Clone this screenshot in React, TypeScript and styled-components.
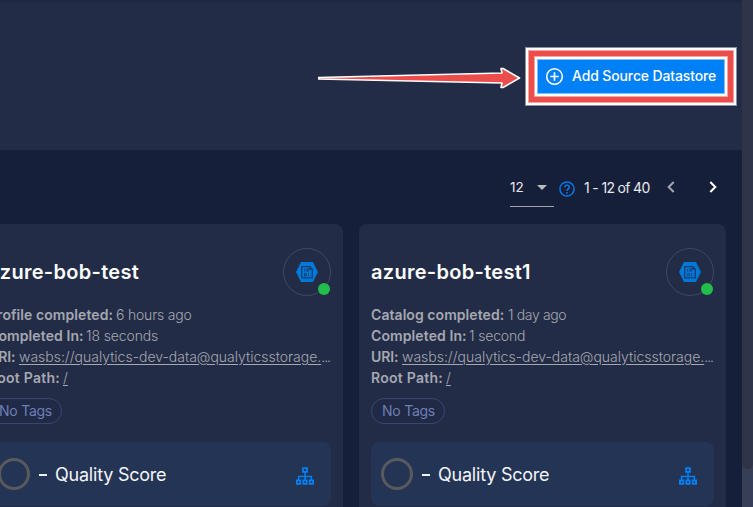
import React from "react";
import styled, { createGlobalStyle } from "styled-components";

const Global = createGlobalStyle`
  * { box-sizing: border-box; }
  body { margin: 0; overflow: hidden; background: #161f39; font-family: Inter, "Noto Sans", sans-serif; }
`;
const Page = styled.div`display: flex; width: 753px; height: 507px; overflow: hidden;`;
const Main = styled.main`width: 742px; height: 507px; overflow: hidden; background: #161f39;`;
const Track = styled.div`width: 11px; background: #373f56;`;
const Thumb = styled.div`height: 469px; background: #2f3449; border-radius: 0 0 5px 5px;`;
const Header = styled.header`
  height: 150px; padding: 47px 5px 0 318px; display: flex; align-items: flex-start;
  background: linear-gradient(#1d2640, #232c46 4px);
`;
const ArrowSvg = styled.svg`display: block; width: 203px; height: 24px; margin: 19px 4px 0 0; flex: none;`;
const Frame = styled.div`
  width: 212px; height: 59px; padding: 12px; flex: none; background: #0080f6;
  box-shadow: inset 0 0 0 1px #8990a0, inset 0 0 0 3px #fff, inset 0 0 0 4px #f4a5a4,
    inset 0 0 0 9px #ec4d4b, inset 0 0 0 10px #f4a5a4, inset 0 0 0 12px #fff, inset 0 0 0 13px #7fbffa;
`;
const AddButton = styled.button`
  display: flex; align-items: center; width: 188px; height: 35px; padding: 0 0 1px 8px; border: 0;
  background: transparent; color: #fff; font: 450 14px/20px Inter, sans-serif; letter-spacing: -0.13px; white-space: nowrap;
  svg { margin-right: 8px; flex: none; }
`;
const Toolbar = styled.div`
  height: 74px; padding: 18px 0 0 510px; display: flex; align-items: flex-start; color: #e8e9ed;
  font-size: 14px; line-height: 20px; white-space: nowrap;
`;
const PageSize = styled.div`
  display: flex; justify-content: space-between; width: 44px; height: 39px; padding: 9px 7px 0 0;
  border-bottom: 1px solid #a2a5b0; font-size: 13.5px;
  svg { margin-top: 8px; }
`;
const Help = styled.svg`display: block; margin: 13px 9px 0 5px; flex: none;`;
const Range = styled.span`width: 83px; padding-top: 10px; letter-spacing: -0.7px; word-spacing: 0.1px;`;
const Chevron = styled.svg`
  display: block; width: 8px; height: 12px; margin-top: 13px; flex: none;
  & + & { margin-left: 34px; }
`;
const Cards = styled.section`
  display: grid; grid-template-columns: 367px 367px; column-gap: 16px; margin-left: -24px;
`;
const Card = styled.article`
  height: 310px; padding: 24px 12px; border-radius: 8px; background: #232c46; color: #a5a8b1;
`;
const CardHead = styled.div`display: flex; justify-content: space-between; height: 48px; margin-bottom: 8px;`;
const Title = styled.h2<{ $track: number }>`
  margin: 0; color: #fff; font-size: 20px; line-height: 48px; font-weight: 600;
  letter-spacing: ${p => p.$track}px; white-space: nowrap;
`;
const Avatar = styled.div`
  position: relative; width: 48px; height: 48px; border: 1px solid #414961; border-radius: 50%;
  display: grid; place-items: center;
`;
const Status = styled.i`
  position: absolute; right: 0; bottom: 0; width: 12px; height: 12px; border-radius: 50%; background: #22bd4b;
`;
const Line = styled.div`display: flex; height: 21px; font-size: 14px; line-height: 21px; white-space: nowrap;`;
const Label = styled.b<{ $w: number; $track: number }>`
  flex: 0 0 ${p => p.$w}px; font-weight: 600; letter-spacing: ${p => p.$track}px;
`;
const Value = styled.span<{ $track: number }>`font-weight: 300; letter-spacing: ${p => p.$track}px;`;
const Link = styled(Value)`text-decoration: underline; text-underline-offset: 2px; text-decoration-skip-ink: auto;`;
const Tag = styled.div`
  width: 74px; height: 26px; margin: 10px 0 18px; padding-left: 10px; border: 1px solid #3c4570; border-radius: 13px;
  background: #202945; color: #6e7fb5; font-size: 14px; line-height: 24px;
  letter-spacing: -0.25px; white-space: nowrap;
`;
const Score = styled.div`
  display: flex; align-items: center; height: 64px; padding: 0 17px 0 10px; border-radius: 8px;
  background: #243455; color: #f4f5f7; font-size: 18px;
`;
const Ring = styled.div`width: 32px; height: 32px; border: 3px solid #5a5a5d; border-radius: 50%; flex: none;`;
const Dash = styled.i`width: 8px; height: 2px; margin: 2px 8px 0 9px; background: #eef0f4;`;
const ScoreName = styled.span`flex: 1; letter-spacing: -0.22px; white-space: nowrap;`;
const TreeSvg = styled.svg`display: block; flex: none; margin-top: 4px;`;

const Arrow = () => (
  <ArrowSvg viewBox="0 0 203 24">
    <path d="M.5 11.5 184 7l-1-4.5h2l16.5 9.5-16.5 9.5h-2l1-4.5L.5 13Z" fill="#ec4d4b" stroke="#fff" strokeWidth="1.6" strokeLinejoin="round" />
  </ArrowSvg>
);
const Plus = () => (
  <svg width="19" height="19" viewBox="0 0 19 19" fill="none" stroke="#fff" strokeWidth="1.6">
    <circle cx="9.5" cy="9.5" r="7.8" /><path d="M9.5 5.3v8.4M5.3 9.5h8.4" />
  </svg>
);
const Storage = () => (
  <svg width="22" height="20" viewBox="0 0 22 20">
    <path d="M5 0h12l5 10-5 10H5L0 10Z" fill="#0078d7" />
    <path d="M5.8 4.7h8l2.5 2.5v8.6H5.8Z" fill="none" stroke="#163e70" strokeWidth="1.3" />
    <path d="M13.5 4.5v3h3" fill="#163e70" stroke="#163e70" strokeWidth=".6" />
    <path d="M8.6 6.5v3M8.5 11.5h1.8v2.5H8.5ZM10.8 6.8h1.7v2.4h-1.7ZM12.6 11v3.2" fill="none" stroke="#163e70" strokeWidth=".9" />
  </svg>
);
const Tree = () => (
  <TreeSvg width="18" height="18" viewBox="0 0 18 18" fill="none" stroke="#0080f6" strokeWidth="1.8">
    <path d="M7 1.2h4v3.6H7ZM.9 13.4h3.4v3.4H.9ZM7.3 13.4h3.4v3.4H7.3ZM13.7 13.4h3.4v3.4h-3.4Z" />
    <path d="M9 5v8M2.6 13V9.5h12.8V13" strokeWidth="1.5" />
  </TreeSvg>
);

type Row = { label: string; w: number; lt: number; value: string; vt: number };
type Store = { name: string; track: number; rows: Row[] };
const stores: Store[] = [
  { name: "azure-bob-test", track: 0.3, rows: [
    { label: "Profile completed:", w: 128, lt: 0.07, value: "6 hours ago", vt: -0.2 },
    { label: "Completed In:", w: 98, lt: 0.1, value: "18 seconds", vt: -0.12 },
  ] },
  { name: "azure-bob-test1", track: 0.3, rows: [
    { label: "Catalog completed:", w: 137, lt: 0.06, value: "1 day ago", vt: -0.36 },
    { label: "Completed In:", w: 98, lt: 0.1, value: "1 second", vt: -0.16 },
  ] },
];

const StoreCard = ({ store }: { store: Store }) => (
  <Card>
    <CardHead><Title $track={store.track}>{store.name}</Title><Avatar><Storage /><Status /></Avatar></CardHead>
    {store.rows.map(r => (
      <Line key={r.label}><Label $w={r.w} $track={r.lt}>{r.label}</Label><Value $track={r.vt}>{r.value}</Value></Line>
    ))}
    <Line><Label $w={31} $track={-0.1}>URI:</Label><Link $track={-0.01}>wasbs://qualytics-dev-data@qualyticsstorage.</Link><Value $track={-1}>...</Value></Line>
    <Line><Label $w={75} $track={0.25}>Root Path:</Label><Link $track={0}>/</Link></Line>
    <Tag>No Tags</Tag>
    <Score><Ring /><Dash /><ScoreName>Quality Score</ScoreName><Tree /></Score>
  </Card>
);

export default function App() {
  return (
    <><Global /><Page>
      <Main>
        <Header><Arrow /><Frame><AddButton><Plus />Add Source Datastore</AddButton></Frame></Header>
        <Toolbar>
          <PageSize>12<svg width="10" height="5" viewBox="0 0 10 5"><path d="M0 0h10L5 5Z" fill="#b9bcc4" /></svg></PageSize>
          <Help width="16" height="16" viewBox="0 0 16 16" fill="none" stroke="#0078e7" strokeWidth="1.5">
            <circle cx="8" cy="8" r="7.1" /><path d="M5.8 6.4a2.2 2.2 0 1 1 3.4 1.8C8.3 8.8 8 9.1 8 10" /><path d="M8 11v1.6" />
          </Help>
          <Range>1 - 12 of 40</Range>
          <Chevron viewBox="0 0 8 12" fill="none" stroke="#a4a7b1" strokeWidth="2"><path d="m6.7 1-5 5 5 5" /></Chevron>
          <Chevron viewBox="0 0 8 12" fill="none" stroke="#fff" strokeWidth="2"><path d="m1.3 1 5 5-5 5" /></Chevron>
        </Toolbar>
        <Cards>{stores.map(s => <StoreCard key={s.name} store={s} />)}</Cards>
      </Main>
      <Track><Thumb /></Track>
    </Page></>
  );
}
